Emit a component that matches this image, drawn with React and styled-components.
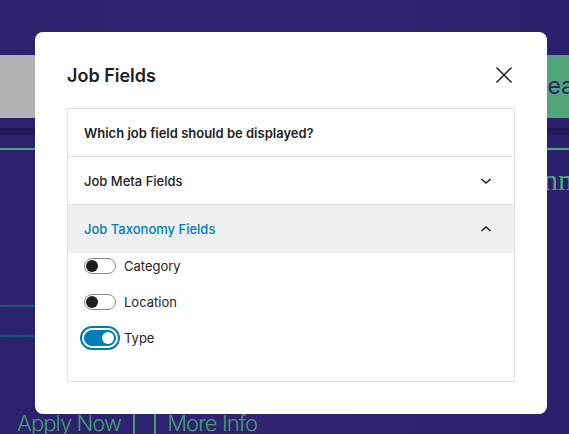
import styled, { createGlobalStyle } from "styled-components";

const GlobalStyle = createGlobalStyle`
  html, body {
    margin: 0;
    padding: 0;
    background: #2d2270;
  }
  * { box-sizing: border-box; }
`;

export default function App() {
  return (
    <Page>
      <GlobalStyle />
      <Backdrop>
        <SearchRow>
          <SearchInput />
          <SearchButton>Search</SearchButton>
        </SearchRow>
        <DarkStrip />
        <GreenLine />
        <Heading>Plann</Heading>
        <TealLine $top={107} />
        <TealLine $top={28} />
        <Links>
          <span>Apply Now</span>
          <Bar />
          <Bar />
          <span>More Info</span>
        </Links>
      </Backdrop>

      <Modal>
        <ModalHeader>
          <Title>Job Fields</Title>
          <CloseButton aria-label="Close">
            <svg width="24" height="24" viewBox="0 0 24 24">
              <path
                d="M4.5 4.5l15 15M19.5 4.5l-15 15"
                stroke="#1e1e1e"
                strokeWidth="1.5"
                fill="none"
              />
            </svg>
          </CloseButton>
        </ModalHeader>

        <Panel>
          <Row>
            <RowLabel $weight={600}>Which job field should be displayed?</RowLabel>
          </Row>
          <Row>
            <RowLabel>Job Meta Fields</RowLabel>
            <Chevron />
          </Row>
          <Row $open>
            <RowLabel $open>Job Taxonomy Fields</RowLabel>
            <Chevron $up />
          </Row>
          <ToggleList>
            <Toggle label="Category" />
            <Toggle label="Location" />
            <Toggle label="Type" checked />
          </ToggleList>
        </Panel>
      </Modal>
    </Page>
  );
}

function Chevron({ $up }) {
  return (
    <svg width="24" height="24" viewBox="0 0 24 24">
      <path
        d={$up ? "M7.5 14l4.5-4 4.5 4" : "M7.5 10l4.5 4 4.5-4"}
        stroke="#1e1e1e"
        strokeWidth="1.5"
        fill="none"
      />
    </svg>
  );
}

function Toggle({ label, checked }) {
  return (
    <ToggleRow>
      <Track $on={checked}>
        <Thumb $on={checked} />
      </Track>
      <ToggleText>{label}</ToggleText>
    </ToggleRow>
  );
}

const Page = styled.div`
  position: relative;
  width: 569px;
  height: 434px;
  overflow: hidden;
  background: linear-gradient(90deg, #2b216d 0%, #2e2472 50%, #2b206b 100%);
  font-family: Inter, "Noto Sans", sans-serif;
`;

const Backdrop = styled.div`
  display: flex;
  flex-direction: column;
  padding-top: 55px;
`;

const SearchRow = styled.div`
  display: flex;
  height: 63px;
`;

const SearchInput = styled.div`
  flex: 1;
  background: #b2b2b2;
`;

const SearchButton = styled.div`
  width: 100px;
  background: #52a679;
  color: #2d2270;
  font-size: 23px;
  display: flex;
  align-items: center;
  justify-content: flex-end;
  margin-right: -40px;
  padding-bottom: 2px;
`;

const DarkStrip = styled.div`
  height: 7px;
  margin-top: 10px;
  background: #221a56;
`;

const GreenLine = styled.div`
  height: 2px;
  margin-top: 13px;
  background: #4fa678;
`;

const Heading = styled.div`
  align-self: flex-end;
  margin-right: -4px;
  margin-top: 12px;
  font-family: "Liberation Serif", serif;
  font-size: 30px;
  line-height: 36px;
  color: #56a67a;
`;

const TealLine = styled.div`
  width: 40px;
  height: 2px;
  margin-top: ${(p) => p.$top}px;
  background: #17587a;
`;

const Links = styled.div`
  margin-top: 71px;
  padding-left: 17px;
  font-size: 22px;
  line-height: 30px;
  font-weight: 300;
  color: #4a9d6e;
  letter-spacing: -0.9px;
  display: flex;
  align-items: center;
  white-space: nowrap;
`;

const Bar = styled.span`
  display: inline-block;
  width: 2px;
  height: 26px;
  margin: 0 0 0 12px;
  background: #4a9d6e;
  & + & {
    margin-left: 19px;
    margin-right: 11px;
  }
`;

const Modal = styled.div`
  position: absolute;
  left: 35px;
  top: 32px;
  width: 512px;
  height: 382px;
  background: #fff;
  border-radius: 8px;
  padding: 0 32px 32px;
  display: flex;
  flex-direction: column;
`;

const ModalHeader = styled.div`
  height: 76px;
  padding-top: 10px;
  display: flex;
  align-items: center;
  justify-content: space-between;
`;

const Title = styled.h1`
  margin: 0;
  font-size: 18px;
  font-weight: 600;
  color: #1e1e1e;
`;

const CloseButton = styled.button`
  border: none;
  background: none;
  padding: 0;
  margin-right: -1px;
  width: 24px;
  height: 24px;
  display: flex;
`;

const Panel = styled.div`
  flex: 1;
  border: 1px solid #e0e0e0;
  display: flex;
  flex-direction: column;
`;

const Row = styled.div`
  height: 48px;
  display: flex;
  align-items: center;
  justify-content: space-between;
  padding: 0 16px;
  border-bottom: 1px solid ${(p) => (p.$open ? "transparent" : "#e0e0e0")};
  background: ${(p) => (p.$open ? "#f0f0f0" : "#fff")};
`;

const RowLabel = styled.span`
  font-size: 13px;
  font-weight: ${(p) => p.$weight || 500};
  color: ${(p) => (p.$open ? "#007cba" : "#1e1e1e")};
`;

const ToggleList = styled.div`
  display: flex;
  flex-direction: column;
  gap: 18px;
  padding: 4px 16px;
`;

const ToggleRow = styled.div`
  display: flex;
  align-items: center;
  gap: 8px;
  height: 18px;
`;

const Track = styled.span`
  position: relative;
  width: 32px;
  height: 16px;
  border-radius: 8px;
  border: 1px solid ${(p) => (p.$on ? "#007cba" : "#8c8c8c")};
  background: ${(p) => (p.$on ? "#007cba" : "#fff")};
  box-shadow: ${(p) => (p.$on ? "0 0 0 2px #fff, 0 0 0 4px #007cba" : "none")};
`;

const Thumb = styled.span`
  position: absolute;
  top: 1px;
  left: ${(p) => (p.$on ? "17px" : "1px")};
  width: 12px;
  height: 12px;
  border-radius: 50%;
  background: ${(p) => (p.$on ? "#fff" : "#1e1e1e")};
`;

const ToggleText = styled.span`
  font-size: 13px;
  color: #1e1e1e;
`;
